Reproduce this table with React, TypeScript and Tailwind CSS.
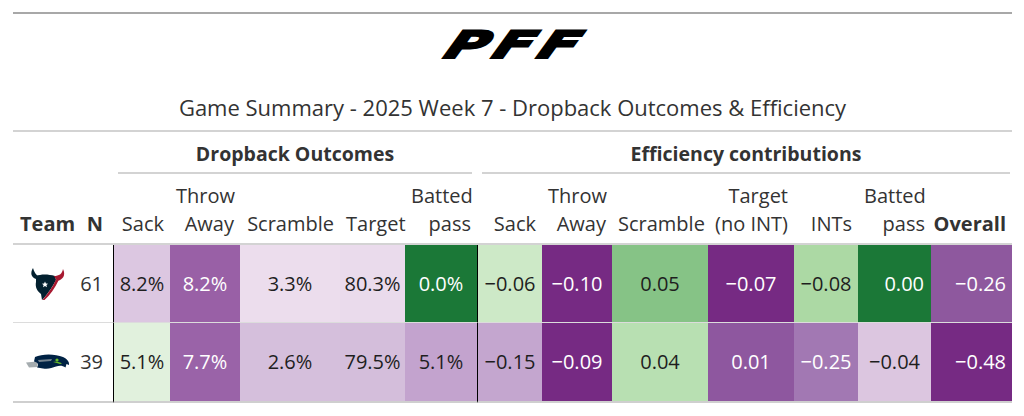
import React from "react";

type Cell = { v: string; bg: string; light?: boolean; align?: string };
type Row = { team: "HOU" | "SEA"; n: number; cells: Cell[] };

const rows: Row[] = [
  {
    team: "HOU",
    n: 61,
    cells: [
      { v: "8.2%", bg: "bg-[#dcc7e1]" },
      { v: "8.2%", bg: "bg-[#9960a6]", light: true },
      { v: "3.3%", bg: "bg-[#ecdded]" },
      { v: "80.3%", bg: "bg-[#eadbec]" },
      { v: "0.0%", bg: "bg-[#1b7837]", light: true },
      { v: "\u22120.06", bg: "bg-[#cde9c7]" },
      { v: "\u22120.10", bg: "bg-[#762a83]", light: true },
      { v: "0.05", bg: "bg-[#86c386]" },
      { v: "\u22120.07", bg: "bg-[#762a83]", light: true },
      { v: "\u22120.08", bg: "bg-[#acd9a4]" },
      { v: "0.00", bg: "bg-[#1b7837]", light: true, align: "text-right pr-[7px]" },
      { v: "\u22120.26", bg: "bg-[#8e589e]", light: true, align: "text-right pr-[6px]" },
    ],
  },
  {
    team: "SEA",
    n: 39,
    cells: [
      { v: "5.1%", bg: "bg-[#e1f1dd]" },
      { v: "7.7%", bg: "bg-[#9a63a8]", light: true },
      { v: "2.6%", bg: "bg-[#d5bfdc]" },
      { v: "79.5%", bg: "bg-[#d4bedb]" },
      { v: "5.1%", bg: "bg-[#c3a3ce]" },
      { v: "\u22120.15", bg: "bg-[#c4a6cf]" },
      { v: "\u22120.09", bg: "bg-[#762a83]", light: true },
      { v: "0.04", bg: "bg-[#b8e0b2]" },
      { v: "0.01", bg: "bg-[#8e579f]", light: true },
      { v: "\u22120.25", bg: "bg-[#a278b3]", light: true },
      { v: "\u22120.04", bg: "bg-[#dcc6e0]" },
      { v: "\u22120.48", bg: "bg-[#762a83]", light: true, align: "text-right pr-[6px]" },
    ],
  },
];

const colWidths = [
  "w-[67px]",
  "w-[33px]",
  "w-[57px]",
  "w-[70px]",
  "w-[100px]",
  "w-[65px]",
  "w-[72px]",
  "w-[65px]",
  "w-[70px]",
  "w-[96px]",
  "w-[86px]",
  "w-[64px]",
  "w-[73px]",
  "w-[81px]",
];

const headers: [string, string][] = [
  ["", "Sack"],
  ["Throw", "Away"],
  ["", "Scramble"],
  ["", "Target"],
  ["Batted", "pass"],
  ["", "Sack"],
  ["Throw", "Away"],
  ["", "Scramble"],
  ["Target", "(no INT)"],
  ["", "INTs"],
  ["Batted", "pass"],
];

function TexansLogo() {
  return (
    <svg width="36" height="34" viewBox="0 0 36 34">
      <path d="M3 1 C0 6 1 10 6 12 L9 10 C6 8 4 5 3 1Z" fill="#03202f" />
      <path d="M6 9 C11 7 18 7 25 9 L26 13 C23 19 19 25 14 31 L12 33 L11 27 C7 24 5 20 6 15 Z" fill="#03202f" />
      <path d="M24 9 C29 9 32 7 33 2 C36 8 33 13 27 14 Z" fill="#a71930" />
      <path d="M26 12.5 L28.5 13.5 C25 21 20 28 14.5 33 L12.5 33 C17.5 27 23 20 26 12.5Z" fill="#a71930" />
      <path d="M15 14.5 L15.9 16.6 L18.1 16.7 L16.4 18.1 L17 20.3 L15 19.1 L13 20.3 L13.6 18.1 L11.9 16.7 L14.1 16.6Z" fill="#ffffff" />
    </svg>
  );
}

function SeahawksLogo() {
  return (
    <svg width="44" height="18" viewBox="0 0 44 18">
      <path d="M0 9.5 L11 8.5 L12 14 L3 14.5 Z" fill="#a5acaf" />
      <path d="M9 4 C16 0.5 29 0.5 37 4 C41 6 43.5 8.5 43 12 L40.5 11 L39.5 14.5 C36.5 12.5 33.5 12.5 30 13.5 C26 15 22 16.5 17 15.5 L11 14.5 C13 12.5 12.5 9.5 8 8.5 Z" fill="#002244" />
      <path d="M12 7 L26 6 L25 8 L13 9 Z" fill="#a5acaf" opacity="0.7" />
      <circle cx="31" cy="7" r="1.6" fill="#69be28" />
      <path d="M27 9 C30 8.5 34 9 36 10.5 L34 11 C32 10 30 10 27 9Z" fill="#69be28" />
    </svg>
  );
}

export default function App() {
  return (
    <div className="w-[1024px] h-[416px] bg-white font-['Open_Sans',sans-serif] text-[#333333]">
      <div className="ml-[13px] w-[999px] pt-[12px]">
        <div className="border-t-2 border-[#a8a8a8]" />
        <div className="h-[62px] flex items-center justify-center">
          <span className="font-['DejaVu_Sans',sans-serif] font-bold italic text-[36px] leading-none text-black tracking-[4px] [-webkit-text-stroke:2px_#000] [transform:translateX(4px)_scaleX(1.58)_scaleY(1.05)_skewX(-16deg)]">
            PFF
          </span>
        </div>
        <div className="h-[54px] pt-[17px] text-center text-[22px] leading-[28px] text-[#333333]">
          Game Summary - 2025 Week 7 - Dropback Outcomes &amp; Efficiency
        </div>
        <table className="table-fixed w-[999px] border-separate border-spacing-0 border-t-2 border-[#d3d3d3] text-[20px]">
          <colgroup>
            {colWidths.map((w, i) => (
              <col key={i} className={w} />
            ))}
          </colgroup>
          <thead>
            <tr className="h-[42px]">
              <th colSpan={2} />
              <th colSpan={5} className="p-0 align-bottom">
                <div className="mx-[5px] border-b-2 border-[#d3d3d3] pb-[4px] leading-[28px] text-[19.5px] font-bold text-[#333333]">
                  Dropback Outcomes
                </div>
              </th>
              <th colSpan={7} className="p-0 align-bottom">
                <div className="ml-[5px] mr-[2px] border-b-2 border-[#d3d3d3] pb-[4px] leading-[28px] text-[19.5px] font-bold text-[#333333]">
                  Efficiency contributions
                </div>
              </th>
            </tr>
            <tr className="h-[71px]">
              <th className="align-bottom text-left pl-[7px] pb-[5px] border-b-2 border-[#d3d3d3] font-bold leading-[28px]">
                Team
              </th>
              <th className="align-bottom text-right pr-[10px] pb-[5px] border-b-2 border-[#d3d3d3] font-bold leading-[28px]">
                N
              </th>
              {headers.map(([a, b], i) => (
                <th
                  key={i}
                  className="align-bottom text-right px-[6px] pb-[5px] border-b-2 border-[#d3d3d3] font-normal leading-[28px] whitespace-nowrap"
                >
                  {a && <div>{a}</div>}
                  <div>{b}</div>
                </th>
              ))}
              <th className="align-bottom text-right pr-[6px] pb-[5px] border-b-2 border-[#d3d3d3] font-bold leading-[28px]">
                Overall
              </th>
            </tr>
          </thead>
          <tbody>
            {rows.map((r, ri) => {
              const last = ri === rows.length - 1;
              const rowBorder = ri > 0 ? "border-t border-[#dcdcdc]" : "";
              const bottom = last ? "border-b-2 border-b-[#cfcfcf]" : "";
              return (
                <tr key={r.team} className={ri === 0 ? "h-[77px]" : "h-[81px]"}>
                  <td className={`p-0 ${rowBorder} ${bottom}`}>
                    <div className="flex justify-center pl-[3px]">
                      {r.team === "HOU" ? <TexansLogo /> : <SeahawksLogo />}
                    </div>
                  </td>
                  <td className={`p-0 pr-[10px] text-right text-[#333333] ${rowBorder} ${bottom}`}>{r.n}</td>
                  {r.cells.map((c, ci) => (
                    <td
                      key={ci}
                      className={`p-0 ${c.align ?? "text-center"} ${c.bg} ${
                        c.light ? "text-white" : "text-[#1e1e1e]"
                      } ${ci === 0 || ci === 5 ? "border-l border-l-black" : ""} ${rowBorder} ${bottom}`}
                    >
                      {c.v}
                    </td>
                  ))}
                </tr>
              );
            })}
          </tbody>
        </table>
      </div>
    </div>
  );
}
